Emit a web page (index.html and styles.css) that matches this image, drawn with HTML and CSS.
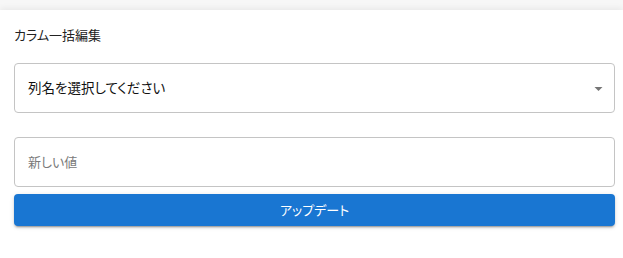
FILE: index.html
```html
<!DOCTYPE html>
<html lang="ja">
<head>
    <meta charset="UTF-8">
    <meta name="viewport" content="width=device-width, initial-scale=1.0">
    <title>カラム一括編集</title>
    <link rel="stylesheet" href="styles.css">
</head>
<body>
    <div class="panel">
        <div class="panel-title">カラム一括編集</div>

        <!-- column picker -->
        <div class="field select-field">
            <span class="select-value">列名を選択してください</span>
            <svg class="select-arrow" width="10" height="5" viewBox="0 0 10 5">
                <path d="M0 0 L10 0 L5 5 Z" fill="#757575"/>
            </svg>
        </div>

        <input class="field text-field" type="text" placeholder="新しい値">

        <button class="update-btn" type="button">アップデート</button>
    </div>
</body>
</html>
```

FILE: styles.css
```css
body {
    font-family: Roboto, "Noto Sans CJK JP", sans-serif;
    font-feature-settings: "palt";
    margin: 0;
    padding: 0;
    background-color: #f7f7f7;
}
.panel {
    margin-top: 10px;
    min-height: calc(100vh - 10px);
    padding: 14px 8px 14px 14px;
    background-color: #fff;
    box-shadow: 0 -2px 6px rgba(0, 0, 0, 0.06);
    box-sizing: border-box;
}
.panel-title {
    font-size: 13px;
    line-height: 24px;
    color: #222;
}
.field {
    display: flex;
    align-items: center;
    width: 100%;
    height: 50px;
    margin: 0;
    padding: 0 13px;
    border: 1px solid #c4c4c4;
    border-radius: 4px;
    background-color: #fff;
    box-sizing: border-box;
    font-family: inherit;
    font-feature-settings: "palt";
}
.select-field {
    margin-top: 15px;
    justify-content: space-between;
    font-size: 13.5px;
    color: #111;
    padding-bottom: 2px;
}
.select-arrow {
    margin-right: -2px;
    margin-top: 3px;
    width: 9px;
    height: 4px;
}
.text-field {
    margin-top: 24px;
    font-size: 13px;
    color: #222;
    outline: none;
}
.text-field::placeholder {
    color: #7a7a7a;
}
.update-btn {
    display: block;
    width: 100%;
    height: 32px;
    margin-top: 7px;
    padding-bottom: 2px;
    border: none;
    border-radius: 4px;
    background-color: #1976d2;
    color: #fff;
    font-family: inherit;
    font-feature-settings: "palt";
    font-size: 13px;
    box-shadow: 0 3px 1px -2px rgba(0, 0, 0, 0.2), 0 2px 2px 0 rgba(0, 0, 0, 0.14), 0 1px 5px 0 rgba(0, 0, 0, 0.12);
    cursor: pointer;
}
```
